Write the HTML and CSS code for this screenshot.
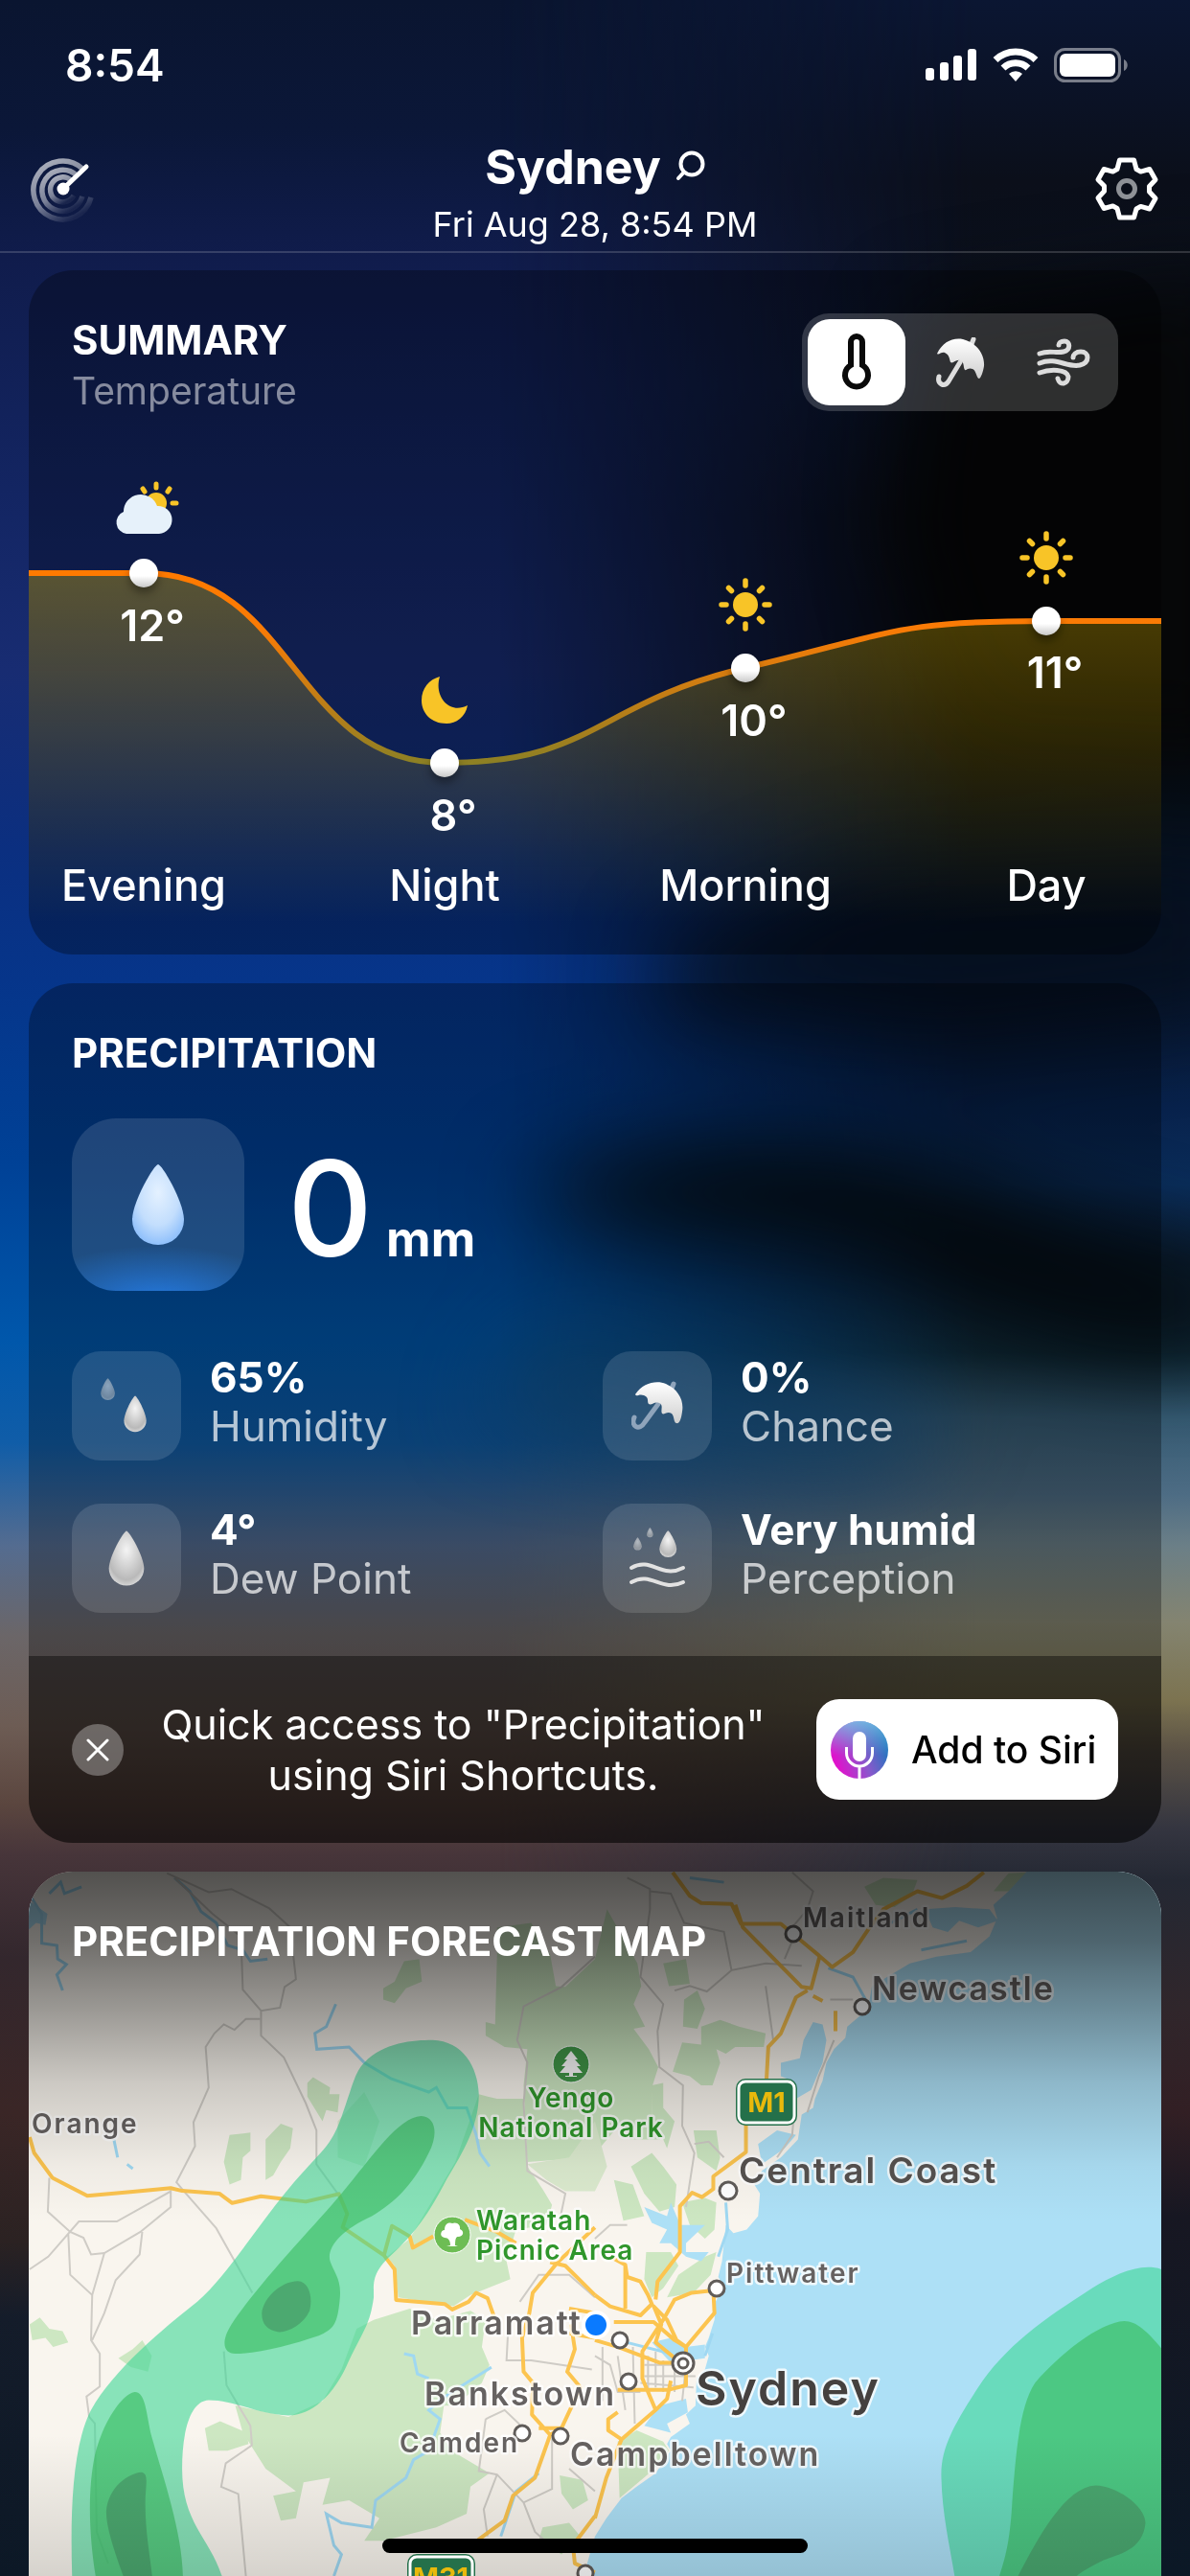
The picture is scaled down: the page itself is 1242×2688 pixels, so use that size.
FILE: index.html
```html
<!DOCTYPE html>
<html lang="en">
<head>
    <meta charset="UTF-8">
    <meta name="viewport" content="width=device-width, initial-scale=1.0">
    <title>Sydney Weather</title>
    <link rel="stylesheet" href="styles.css">
</head>
<body>

    <!-- Blurred night sky behind everything -->
    <svg class="sky" viewBox="0 0 1242 2688" preserveAspectRatio="none" aria-hidden="true">
        <defs>
            <linearGradient id="sky-left" x1="0" y1="0" x2="0" y2="1">
                <stop offset="0" stop-color="#0a1530"/>
                <stop offset=".05" stop-color="#0b1738"/>
                <stop offset=".1" stop-color="#101c4c"/>
                <stop offset=".19" stop-color="#132562"/>
                <stop offset=".26" stop-color="#182c72"/>
                <stop offset=".33" stop-color="#0b2f80"/>
                <stop offset=".38" stop-color="#06358a"/>
                <stop offset=".45" stop-color="#004196"/>
                <stop offset=".52" stop-color="#0057ab"/>
                <stop offset=".56" stop-color="#105da8"/>
                <stop offset=".6" stop-color="#546c90"/>
                <stop offset=".635" stop-color="#6b6668"/>
                <stop offset=".67" stop-color="#6d5c54"/>
                <stop offset=".7" stop-color="#5b463f"/>
                <stop offset=".72" stop-color="#47353a"/>
                <stop offset=".76" stop-color="#33272d"/>
                <stop offset=".82" stop-color="#3a2626"/>
                <stop offset=".87" stop-color="#2b2222"/>
                <stop offset=".9" stop-color="#141c2a"/>
                <stop offset="1" stop-color="#0c1826"/>
            </linearGradient>
            <linearGradient id="sky-right" x1="0" y1="0" x2="0" y2="1">
                <stop offset="0" stop-color="#0b1632"/>
                <stop offset=".04" stop-color="#0b1225"/>
                <stop offset=".07" stop-color="#0b0f1a"/>
                <stop offset=".15" stop-color="#0a111e"/>
                <stop offset=".2" stop-color="#080909"/>
                <stop offset=".28" stop-color="#060709"/>
                <stop offset=".33" stop-color="#06101c"/>
                <stop offset=".38" stop-color="#06142a"/>
                <stop offset=".43" stop-color="#08224c"/>
                <stop offset=".46" stop-color="#0a2d5a"/>
                <stop offset=".49" stop-color="#0b2038"/>
                <stop offset=".525" stop-color="#12303f"/>
                <stop offset=".55" stop-color="#355a72"/>
                <stop offset=".58" stop-color="#4d6c84"/>
                <stop offset=".6" stop-color="#6b7f87"/>
                <stop offset=".63" stop-color="#848470"/>
                <stop offset=".66" stop-color="#7c7350"/>
                <stop offset=".68" stop-color="#5a5145"/>
                <stop offset=".71" stop-color="#343540"/>
                <stop offset=".73" stop-color="#242833"/>
                <stop offset=".78" stop-color="#30262b"/>
                <stop offset=".82" stop-color="#321f24"/>
                <stop offset=".86" stop-color="#171722"/>
                <stop offset="1" stop-color="#0b1826"/>
            </linearGradient>
            <linearGradient id="sky-fade">
                <stop offset=".42" stop-color="#000"/>
                <stop offset=".82" stop-color="#fff"/>
            </linearGradient>
            <mask id="sky-mask"><rect width="1242" height="2688" fill="url(#sky-fade)"/></mask>
            <filter id="soft" x="-40%" y="-60%" width="180%" height="220%" color-interpolation-filters="sRGB"><feGaussianBlur stdDeviation="45"/></filter>
        </defs>
        <rect width="1242" height="2688" fill="url(#sky-left)"/>
        <rect width="1242" height="2688" fill="url(#sky-right)" mask="url(#sky-mask)"/>
        <g filter="url(#soft)">
            <path d="M960 330 1300 280 1300 780 1010 760 940 560Z" fill="#060708"/>
            <path d="M690 990 900 900 1300 880 1300 1050 980 1090 700 1060Z" fill="#05101f" opacity=".9"/>
            <path d="M540 1240C700 1180 860 1180 980 1220 1080 1260 1180 1300 1300 1320L1300 1410C1180 1430 1060 1390 920 1320 780 1290 640 1300 540 1240Z" fill="#050d13"/>
            <path d="M560 1390 1000 1480 900 1540 500 1480Z" fill="#155488" opacity=".7"/>
        </g>
    </svg>

    <div class="status-bar">
        <span class="clock">8:54</span>
        <div class="status-icons">
            <svg width="54" height="36" viewBox="0 0 54 36" fill="#fff" aria-hidden="true">
                <rect x="0" y="21" width="9" height="13" rx="3"/>
                <rect x="15" y="15" width="9" height="19" rx="3"/>
                <rect x="29" y="8" width="9" height="26" rx="3"/>
                <rect x="44" y="1" width="9" height="33" rx="3"/>
            </svg>
            <svg width="48" height="36" viewBox="0 0 48 36" aria-hidden="true">
                <g fill="none" stroke="#fff" stroke-width="7">
                    <path d="M3 12.500a30 30 0 0 1 42 0"/>
                    <path d="M11 21a18.500 18.500 0 0 1 26 0"/>
                </g>
                <path d="M24 35l-7-8a10 10 0 0 1 14 0z" fill="#fff"/>
            </svg>
            <svg width="78" height="36" viewBox="0 0 78 36" aria-hidden="true">
                <rect x="1.500" y="1.500" width="67" height="33" rx="10" fill="none" stroke="#fff" stroke-opacity=".45" stroke-width="3"/>
                <rect x="6" y="6" width="58" height="24" rx="6" fill="#fff"/>
                <path d="M73 12c5 2 5 10 0 12z" fill="#fff" fill-opacity=".45"/>
            </svg>
        </div>
    </div>

    <header class="top-bar">
        <button class="icon-button" aria-label="Radar">
            <svg width="70" height="70" viewBox="0 0 70 70" fill="none" aria-hidden="true">
                <defs>
                    <linearGradient id="radar" x1=".2" y1="0" x2=".75" y2=".95">
                        <stop offset="0" stop-color="#fff" stop-opacity=".65"/>
                        <stop offset=".55" stop-color="#fff" stop-opacity=".45"/>
                        <stop offset="1" stop-color="#fff" stop-opacity=".05"/>
                    </linearGradient>
                </defs>
                <g stroke="url(#radar)" stroke-width="5.500">
                    <path d="M55 14A30.500 30.500 0 1 0 64 44"/>
                    <path d="M49 21A21.500 21.500 0 1 0 55 43"/>
                    <path d="M43 26A13 13 0 1 0 46 42"/>
                </g>
                <circle cx="35" cy="35" r="6.500" fill="#fff"/>
                <path d="M35 35 59 12" stroke="#fff" stroke-width="5" stroke-linecap="round"/>
            </svg>
        </button>
        <div class="place">
            <h1>Sydney
                <svg width="32" height="34" viewBox="0 0 32 34" fill="none" stroke="#fff" stroke-width="4" stroke-linecap="round" aria-hidden="true">
                    <circle cx="18" cy="14" r="11.500"/>
                    <path d="M9.500 23 4 29"/>
                </svg>
            </h1>
            <p>Fri Aug 28, 8:54 PM</p>
        </div>
        <button class="icon-button" aria-label="Settings">
            <svg width="70" height="70" viewBox="0 0 70 70" fill="none" stroke-linejoin="round" aria-hidden="true">
                <path stroke="#fff" stroke-width="5" d="M27.500 5h15l2.500 9.500 4.500 2.600 9.300-2.600 6.200 11-6.500 7v5.500l6.500 7-6.200 11-9.300-2.600-4.500 2.600L42.500 65h-15L25 55.500l-4.500-2.600-9.300 2.600L5 44.500l6.500-7V32L5 25.500l6.200-11 9.300 2.600 4.500-2.600z"/>
                <circle cx="35" cy="35" r="8.500" stroke="#8e9197" stroke-width="5"/>
            </svg>
        </button>
    </header>

    <main>
        <section class="card">
            <div class="summary-head">
                <div>
                    <h2>SUMMARY</h2>
                    <p class="subtitle">Temperature</p>
                </div>
                <div class="segments">
                    <button class="active" aria-label="Temperature">
                        <svg width="32" height="60" viewBox="0 0 32 60" fill="none" stroke="#0a0a0a" stroke-width="6" aria-hidden="true">
                            <path d="M10 33V9a6 6 0 0 1 12 0v24a12 12 0 1 1-12 0z"/>
                        </svg>
                    </button>
                    <button aria-label="Precipitation">
                        <svg width="53" height="53" viewBox="0 0 53 53" aria-hidden="true">
                            <defs>
                                <linearGradient id="silver" x1="0" y1="0" x2="0" y2="1">
                                    <stop offset="0" stop-color="#fff"/>
                                    <stop offset="1" stop-color="#cfcfcf"/>
                                </linearGradient>
                            </defs>
                            <path d="M26 26 14 46C9 53 2 48 4 41M38 7l2-5" fill="none" stroke="#dedede" stroke-width="5" stroke-linecap="round"/>
                            <path d="M2 17C8 5 18 0 29 2 44 6 52 18 51 30 50 36 48 42 46 43 43 43 43 34 39 33 35 31 32 35 31 34 29 31 31 26 26 24 21 23 19 28 16 26 15 23 15 18 10 16 6 15 4 19 2 17Z" fill="url(#silver)"/>
                        </svg>
                    </button>
                    <button aria-label="Wind">
                        <svg width="56" height="52" viewBox="0 0 56 52" fill="none" stroke="#dcdcdc" stroke-width="5" stroke-linecap="round" aria-hidden="true">
                            <path d="M3 17C13 13 20 17 28 15 36 13 35 4 29 4 25 4 23 6 23 8"/>
                            <path d="M3 27C20 20 32 32 45 29 56 26 55 15 46 15 41 15 38 18 38 21"/>
                            <path d="M3 37C14 33 31 33 33 41 33 49 24 51 22 43"/>
                        </svg>
                    </button>
                </div>
            </div>

            <svg class="chart" viewBox="0 0 1182 563" role="img" aria-label="Temperature by time of day">
                <defs>
                    <linearGradient id="line" gradientUnits="userSpaceOnUse" x1="0" y1="165" x2="0" y2="363">
                        <stop offset="0" stop-color="#ff7a00"/>
                        <stop offset=".3" stop-color="#f97b06"/>
                        <stop offset="1" stop-color="#8d8024"/>
                    </linearGradient>
                    <linearGradient id="area" gradientUnits="userSpaceOnUse" x1="0" y1="165" x2="0" y2="530">
                        <stop offset="0" stop-color="#ffd000" stop-opacity=".31"/>
                        <stop offset=".7" stop-color="#ffd000" stop-opacity=".09"/>
                        <stop offset="1" stop-color="#ffd000" stop-opacity="0"/>
                    </linearGradient>
                    <linearGradient id="knob" x1="0" y1="0" x2="0" y2="1">
                        <stop offset=".6" stop-color="#fff"/>
                        <stop offset="1" stop-color="#c9c9c9"/>
                    </linearGradient>
                    <filter id="drop" x="-50%" y="-50%" width="200%" height="220%" color-interpolation-filters="sRGB"><feDropShadow dx="0" dy="6" stdDeviation="5" flood-opacity=".35"/></filter>
                    <g id="sun" stroke="#f8c427" stroke-width="5.500" stroke-linecap="round">
                        <circle r="13" fill="#f8c427" stroke="none"/>
                        <path d="M0-20v-5M0 20v5M-20 0h-5M20 0h5M14.500-14.500l3-3M-14.500-14.500l-3-3M14.500 14.500l3 3M-14.500 14.500l-3 3"/>
                    </g>
                </defs>
                <path d="M0 165H120C277 165 277 363 434 363S591 301 748 264 905 215 1062 215H1182V563H0Z" fill="url(#area)"/>
                <path d="M-5 165H120C277 165 277 363 434 363S591 301 748 264 905 215 1062 215H1190" fill="none" stroke="url(#line)" stroke-width="6"/>
                <g fill="url(#knob)" filter="url(#drop)">
                    <circle cx="120" cy="165" r="15"/>
                    <circle cx="434" cy="363" r="15"/>
                    <circle cx="748" cy="264" r="15"/>
                    <circle cx="1062" cy="215" r="15"/>
                </g>

                <!-- weather icons -->
                <g stroke="#f8c427" stroke-width="5" stroke-linecap="round">
                    <circle cx="133" cy="92" r="11" fill="#f8c427" stroke="none"/>
                    <path d="M133 76v-4M145 80l2-3M121 80l-2-3M150 92h4"/>
                </g>
                <path d="M102 124A12 12 0 0 1 99 101 18 18 0 0 1 134 95 14.500 14.500 0 0 1 136 124Z" fill="#e6f1fa"/>
                <path d="M429 273C425 286 430 299 440 304 446 307 452 306 458 303 456 315 446 322 436 322 420 322 410 311 410 298 410 285 418 276 429 273Z" fill="#f8c427"/>
                <use href="#sun" x="748" y="198"/>
                <use href="#sun" x="1062" y="149"/>

                <g class="temps">
                    <text x="129" y="236">12°</text>
                    <text x="443" y="434">8°</text>
                    <text x="757" y="335">10°</text>
                    <text x="1071" y="285">11°</text>
                </g>
                <g class="times">
                    <text x="120" y="507">Evening</text>
                    <text x="434" y="507">Night</text>
                    <text x="748" y="507">Morning</text>
                    <text x="1062" y="507">Day</text>
                </g>
            </svg>
        </section>

        <section class="card">
            <div class="precipitation">
                <h2>PRECIPITATION</h2>
                <div class="amount">
                    <div class="tile tile-large">
                        <svg width="56" height="86" viewBox="0 0 56 86" aria-hidden="true">
                            <defs>
                                <radialGradient id="blue-drop" cx=".5" cy=".35" r=".68">
                                    <stop offset="0" stop-color="#e4f1ff"/>
                                    <stop offset=".6" stop-color="#c3defd"/>
                                    <stop offset="1" stop-color="#8abdfb"/>
                                </radialGradient>
                                <radialGradient id="grey-drop" cx=".5" cy=".35" r=".68">
                                    <stop offset="0" stop-color="#f4f4f4"/>
                                    <stop offset=".8" stop-color="#b9b9b9"/>
                                    <stop offset="1" stop-color="#dcdcdc"/>
                                </radialGradient>
                                <path id="drop-shape" d="M28 1C32 1 55 40 55 59A27 26 0 0 1 1 59C1 40 24 1 28 1Z"/>
                            </defs>
                            <use href="#drop-shape" fill="url(#blue-drop)"/>
                        </svg>
                    </div>
                    <p class="value">0 <span>mm</span></p>
                </div>

                <div class="details">
                    <div class="detail">
                        <div class="tile">
                            <svg width="72" height="72" viewBox="0 0 72 72" aria-hidden="true">
                                <g transform="translate(9 7) scale(.27)" opacity=".5"><use href="#drop-shape" fill="url(#grey-drop)"/></g>
                                <g transform="translate(33 25) scale(.43 .45)"><use href="#drop-shape" fill="url(#grey-drop)"/></g>
                            </svg>
                        </div>
                        <p><strong>65%</strong>Humidity</p>
                    </div>
                    <div class="detail">
                        <div class="tile">
                            <svg width="54" height="52" viewBox="0 0 54 52" aria-hidden="true">
                                <path d="M28 24 14 43C8 53-1 47 3 38M42 8l2-5" fill="none" stroke="#8fa4bb" stroke-width="5" stroke-linecap="round"/>
                                <path d="M4 14C12 2 26-1 36 3 49 9 55 20 53 32 52 40 50 45 47 44 44 44 45 37 42 34 37 31 34 36 32 34 30 31 34 25 29 23 24 21 21 26 18 24 16 22 19 17 13 15 8 13 5 17 4 14Z" fill="url(#silver)"/>
                            </svg>
                        </div>
                        <p><strong>0%</strong>Chance</p>
                    </div>
                    <div class="detail">
                        <div class="tile">
                            <svg width="38" height="60" viewBox="0 0 56 86" aria-hidden="true">
                                <use href="#drop-shape" fill="url(#grey-drop)"/>
                            </svg>
                        </div>
                        <p><strong>4°</strong>Dew Point</p>
                    </div>
                    <div class="detail">
                        <div class="tile">
                            <svg width="60" height="66" viewBox="0 0 60 66" aria-hidden="true">
                                <g transform="translate(5 11) scale(.16)" opacity=".6"><use href="#drop-shape" fill="url(#grey-drop)"/></g>
                                <g transform="translate(19 1) scale(.12)" opacity=".6"><use href="#drop-shape" fill="url(#grey-drop)"/></g>
                                <g transform="translate(32 4) scale(.33)"><use href="#drop-shape" fill="url(#grey-drop)"/></g>
                                <path d="M3 43C24 31 34 55 57 43M3 58C24 46 34 69 57 58" fill="none" stroke="#e2e2e2" stroke-width="4" stroke-linecap="round"/>
                            </svg>
                        </div>
                        <p><strong>Very humid</strong>Perception</p>
                    </div>
                </div>
            </div>

            <div class="siri">
                <button class="close" aria-label="Dismiss">
                    <svg width="24" height="24" viewBox="0 0 24 24" stroke="#fff" stroke-width="3" stroke-linecap="round" aria-hidden="true"><path d="M2 2 22 22M22 2 2 22"/></svg>
                </button>
                <p>Quick access to "Precipitation" using Siri Shortcuts.</p>
                <button class="add-siri">
                    <svg width="60" height="60" viewBox="0 0 60 60" aria-hidden="true">
                        <defs>
                            <linearGradient id="siri-a" x1="0" y1=".8" x2="1" y2=".4">
                                <stop offset=".1" stop-color="#e012cc"/>
                                <stop offset=".55" stop-color="#8a58cc"/>
                                <stop offset="1" stop-color="#1878bd"/>
                            </linearGradient>
                            <linearGradient id="siri-b" x1="0" y1="0" x2="0" y2="1">
                                <stop offset="0" stop-color="#7fcbea" stop-opacity=".75"/>
                                <stop offset=".6" stop-color="#7fb0e0" stop-opacity="0"/>
                            </linearGradient>
                        </defs>
                        <circle cx="30" cy="30" r="30" fill="url(#siri-a)"/>
                        <circle cx="30" cy="30" r="30" fill="url(#siri-b)"/>
                        <rect x="23" y="11" width="14" height="31" rx="7" fill="#fff"/>
                        <path d="M16.500 27v6a13.500 14 0 0 0 27 0v-6M30 47v13" fill="none" stroke="#fff" stroke-width="3"/>
                    </svg>
                    Add to Siri
                </button>
            </div>
        </section>

        <section class="card map-card">
            <h2>PRECIPITATION FORECAST MAP</h2>
            <svg class="map" viewBox="0 0 1182 735" role="img" aria-label="Rain around Sydney">
                <defs>
                    <linearGradient id="map-shade" x1="0" y1="0" x2="0" y2="1">
                        <stop offset="0" stop-opacity=".67"/>
                        <stop offset=".1" stop-opacity=".55"/>
                        <stop offset=".2" stop-opacity=".37"/>
                        <stop offset=".3" stop-opacity=".18"/>
                        <stop offset=".42" stop-opacity=".04"/>
                        <stop offset=".5" stop-opacity="0"/>
                        <stop offset=".8" stop-opacity="0"/>
                        <stop offset="1" stop-opacity=".14"/>
                    </linearGradient>
                </defs>
                <rect width="1182" height="735" fill="#f9f5ee"/>

                <!-- terrain, drawn on a 2985 x 1568 sheet -->
                <g class="terrain" transform="translate(-30 -3) scale(.396 .4707)">
                    <g fill="#cde7c2">
                        <path d="M1310 190 1310 130 1400 120 1450 190 1465 260 1490 262 1568 200 1600 90 1680 210 1690 260 1670 300 1700 350 1670 355 1710 400 1735 440 1720 480 1718 560 1740 600 1660 600 1640 560 1560 640 1390 650 1380 480 1390 400 1330 395 1280 370 1280 340 1305 345Z"/>
                        <path d="M1262 500 1310 510 1380 510 1390 660 1430 710 1455 745 1440 790 1360 800 1335 870 1345 910 1240 945 1195 970 1050 950 1040 880 1020 860 1080 820 1200 650Z"/>
                        <path d="M985 1000 1080 975 1150 1000 1240 980 1280 1000 1270 1060 1290 1100 1270 1140 1200 1190 1170 1190 1160 1250 1190 1290 1290 1340 1240 1370 1230 1430 1150 1460 1010 1490 960 1490 1000 1440 920 1400 850 1410 870 1350 800 1360 780 1440 740 1445 720 1390 780 1380 700 1330 640 1250 620 1190 760 1215 850 1180 900 1110 940 1020Z"/>
                        <path d="M1010 265 1040 250 1065 205 1105 200 1112 250 1070 265 1040 298 1010 290Z"/>
                        <path d="M810 475 825 462 870 485 868 500 895 500 890 540 860 535 850 560 810 505ZM590 650 605 590 660 585 660 625 640 640 635 690 605 700ZM700 600 740 565 772 575 765 620 740 650 720 680 700 690Z"/>
                        <path d="M78 1010 105 995 130 1020 165 1025 180 1050 140 1060 120 1040 85 1045ZM312 1085 350 1065 375 1045 400 1080 390 1115 345 1105ZM540 1240 580 1225 650 1250 655 1275 600 1290 550 1290Z"/>
                        <path d="M1475 1345 1535 1355 1550 1400 1510 1420 1480 1385ZM1430 1460 1500 1450 1530 1480 1480 1520 1420 1490Z"/>
                    </g>
                    <g fill="#dcebcf">
                        <path d="M1390 655 1500 640 1568 560 1600 660 1568 715 1490 715 1440 690ZM890 560 960 495 1000 560 960 660 890 640Z"/>
                    </g>
                    <g transform="translate(1568)" fill="#cde7c2">
                        <path d="M710 40 760 20 850 25 835 60 790 85 740 80ZM1050 50 1090 10 1140 8 1100 50Z"/>
                        <path d="M180 210 240 200 250 255 195 260ZM235 290 270 270 290 310 270 355 232 350ZM280 350 330 335 380 350 450 365 445 395 370 395 345 410 320 400 330 430 310 480 280 480 250 460 205 450 230 385 280 390Z"/>
                        <path d="M150 480 180 475 180 530 210 560 190 620 170 580 150 575ZM260 580 320 580 330 640 320 670 270 640ZM95 660 150 630 180 660 215 700 210 750 170 760 130 720ZM50 690 100 700 130 770 75 780Z"/>
                        <path d="M230 740 290 730 320 740 315 800 290 820 250 790ZM135 850 200 850 220 880 180 930 150 950 130 910ZM190 950 220 900 290 860 320 850 305 900 260 940ZM60 1270 110 1245 180 1270 195 1290 150 1335 65 1395Z"/>
                    </g>

                    <!-- sea and lakes -->
                    <path transform="translate(1568)" fill="#ade0f6" d="M1145 0 1090 50 1050 80 1060 110 1040 150 990 185 900 195 830 210 770 240 730 260 722 300 700 325 665 350 660 375 630 400 610 430 600 470 580 510 575 530 545 545 535 600 490 640 440 670 420 700 435 720 430 770 400 800 365 808 345 790 340 830 335 870 325 905 340 925 318 960 315 1000 300 1040 290 1060 300 1080 290 1110 268 1130 265 1190 240 1210 250 1230 200 1260 190 1275 200 1290 160 1340 110 1370 70 1395 30 1440 0 1480-30 1568H1500V0Z"/>
                    <g transform="translate(1568)" fill="#ade0f6">
                        <path d="M870 90 950 85 1040 90 1062 115 1010 130 960 115 930 140 890 130ZM575 340 600 345 610 380 600 430 570 490 530 510 520 470 490 460 490 430 540 420 550 380ZM430 610 480 580 530 590 500 620 440 655ZM150 1050 200 1040 240 1060 290 1055 290 1085 200 1095ZM170 1190 240 1175 245 1205 190 1230 200 1250 130 1235Z"/>
                        <path d="M130 750 190 770 200 740 225 790 290 790 240 830 240 850 300 850 280 870 240 860 200 830 170 830 190 800 150 785Z"/>
                    </g>
                    <path fill="#ade0f6" d="M76 70 100 85 125 100 120 125 95 120 76 135Z"/>
                    <g class="water">
                        <path d="M80 60 110 100 110 165 150 170 152 200 175 212 150 235 165 270M130 55 160 30 170 55 215 40M460 20 500 50 530 95 570 120 600 170 640 180 660 205 705 200M885 300 860 350 830 365 835 400 920 395 960 430 1030 465 1130 495 1150 485 1180 530 1230 530 1255 590 1265 630 1290 660M1065 1075 1090 1080 1100 1120 1130 1130M1295 1105 1210 1150 1165 1175 1130 1200 1160 1220 1130 1290 1090 1310 1070 1350 990 1400 980 1460 900 1450 860 1430 880 1500 900 1520 880 1568M1320 1480 1360 1380 1420 1340M300 600 310 640M335 655 350 665"/>
                        <path transform="translate(1568)" d="M615 220 680 240 720 300M850 90 780 120M980 160 860 180M345 740 350 800 325 860M60 1045 200 1075M310 1030 290 1080M250 20 340 30"/>
                    </g>

                    <g class="minor-roads">
                        <path d="M440 10 550 52 610 45 710 88 765 130 780 245 750 262 738 308 688 315 640 268 635 150 560 100 460 20M688 315 688 370 748 418 806 520 834 580 834 655 890 720M685 333 648 333 618 357 590 345 565 365 542 395 550 485 510 562 514 615 465 695 490 720 570 797 665 940M130 685 126 760 185 805 220 818 240 855 275 852 370 805 450 750 450 715 308 782 208 782 127 860 78 888M180 810 185 900 243 945 240 1045 263 1075 263 1148 228 1170 235 1215 250 1230 255 1470 285 1540M375 805 368 855 305 912 275 985 243 1045M275 852 243 945M590 1070 597 1145 660 1235 664 1278 595 1318 583 1370 628 1386 648 1568"/>
                        <path d="M1568 195 1480 262 1380 305 1363 380 1390 430 1380 520 1390 670 1490 720 1475 780M1340 1010 1335 1090 1400 1090 1480 1100 1560 1110M1370 960 1420 900 1500 900 1568 950M1280 1220 1330 1200 1380 1240M1280 1220 1262 1335 1310 1343 1380 1405 1455 1375 1455 1260M1310 1343 1275 1420 1285 1480M1380 1405 1410 1470 1450 1500M1500 1330 1568 1380"/>
                        <path transform="translate(1568)" d="M85 20 145 45 145 90 120 240 180 300 165 360 170 440 232 480 230 570 262 630 240 750M145 50 200 55 235 120 340 140 360 225 450 210 545 215M210 270 250 260 295 272 360 225M450 260 470 380M520 8 575 50 560 90 520 130M530 140 500 200M262 610 300 605 340 640M620 290 680 290M630 380 590 460 560 540M480 640 520 590 525 540M0 820 40 790 85 790M0 1080 40 1100 60 1160 120 1160M20 1060 20 1180M60 1080 80 1200M100 1060 105 1230M140 1080 140 1160M180 1090 180 1160M130 1100H250M130 1125H265M120 1140 260 1150M210 1080V1160M240 1100 230 1180M160 1070 160 1150"/>
                    </g>

                    <g class="major-roads">
                        <path d="M78 595 90 630 138 685 230 725 350 716 450 708 480 714 578 720 612 741 688 726 806 738 893 721 915 765 903 795 1012 857 1033 792 1080 815 1088 840 1142 815M1012 857 1040 888 1044 956 1172 965 1192 977 1235 960 1255 940 1285 952 1305 1000M1225 778 1310 805 1360 830M1568 795 1470 872 1404 940 1395 985 1376 1040 1380 1115 1405 1140 1402 1210 1450 1255 1410 1350 1352 1390 1330 1445 1260 1488M1450 872 1490 880 1568 945M1500 975 1568 985M1505 1010 1515 1065 1495 1115 1530 1150 1480 1240 1420 1240M1450 1255 1480 1240M1568 1435 1510 1500 1515 1540 1568 1560M1500 1030 1568 1040"/>
                        <path transform="translate(1568)" d="M205 8 250 60 280 76 360 78 385 122 490 122 590 192 625 218 680 185 720 135 760 90 850 50 915 65 980 38 1025 8M370 80 390 130 545 262 570 265 592 195M560 270 530 285 490 365 457 395 452 470M398 565 398 628 312 682 312 710 282 728 256 718 224 748 224 850 165 915 160 955M0 945 40 970 120 990 150 965 140 945 120 915 85 905 80 878 40 860M80 878 80 975M50 1005H155L210 1045 240 1060 315 985 312 935 255 940 210 955 180 1000 125 1070 125 1130 160 1200 70 1265 35 1245 35 1220 60 1205M0 1045 60 1060 170 1095 225 1095 160 1050 175 1010 155 970 190 1000 215 1045 240 1060 240 1145 195 1155 60 1155M70 1265 30 1350 0 1440M200 1135 190 1175 160 1200M575 282 600 293M634 315V360"/>
                    </g>

                    <!-- rain -->
                    <g class="rain">
                        <path class="light" d="M960 430C1010 385 1090 380 1140 380 1220 382 1260 440 1262 500 1262 580 1210 640 1170 700 1120 780 1080 820 1020 865 980 900 985 920 985 950 975 1010 960 1020 920 1090 880 1170 820 1212 760 1212 680 1210 620 1178 550 1178 500 1180 480 1250 480 1330 480 1450 550 1480 585 1568L190 1568C185 1430 190 1280 240 1200 300 1110 430 1020 520 960 600 900 680 790 760 710 850 620 870 620 900 550 930 480 935 450 960 430Z"/>
                        <path class="medium" d="M1110 548C1150 550 1155 590 1130 630 1090 700 1040 740 980 770 900 800 860 840 870 870 880 895 900 910 896 950 890 1010 880 1020 840 1035 770 1055 680 1075 620 1075 590 1075 580 1050 610 1010 680 920 830 790 900 720 980 640 1050 550 1110 548ZM355 1160C385 1160 385 1210 400 1260 430 1350 480 1470 482 1568L252 1568C235 1480 230 1380 250 1300 270 1230 320 1165 355 1160Z"/>
                        <path class="heavy" d="M690 985C695 950 740 915 785 914 815 915 825 950 816 980 800 1010 760 1028 735 1027 705 1023 690 1010 690 985ZM372 1338C395 1340 382 1370 383 1410 383 1470 395 1520 401 1568L325 1568C300 1510 280 1460 280 1425 285 1370 340 1340 372 1338Z"/>
                        <g transform="translate(1568)">
                            <path class="light" d="M1500 890C1440 870 1370 900 1310 930 1180 1000 1080 1060 1010 1150 940 1240 910 1290 913 1350 915 1430 935 1500 948 1568L1500 1568Z"/>
                            <path class="medium" d="M1500 1070C1460 1030 1430 1003 1395 1003 1330 1005 1220 1080 1160 1140 1120 1190 1110 1290 1100 1400 1095 1480 1085 1520 1066 1568L1500 1568Z"/>
                            <path class="heavy" d="M1115 1568C1170 1480 1240 1370 1320 1367 1370 1367 1450 1410 1451 1450 1445 1510 1380 1520 1340 1533 1310 1545 1280 1560 1270 1568Z"/>
                        </g>
                    </g>
                </g>

                <!-- parks -->
                <circle cx="566" cy="201" r="19" fill="#419848" stroke="#fff" stroke-width="1"/>
                <path d="M566 187 573 196H570L576 203H572L578 210H568V213H572V214H560V213H564V210H554L560 203H556L562 196H559Z" fill="#fff"/>
                <circle cx="442" cy="379" r="19" fill="#6dbd54" stroke="#fff" stroke-width="1"/>
                <path d="M434 382C428 381 430 374 434 374 434 366 440 366 442 367 447 365 451 369 450 373 455 375 454 381 448 381 446 381 445 383 445 390L448 391H436L440 390C440 385 438 382 434 382Z" fill="#fff"/>

                <g class="towns">
                    <circle cx="798" cy="65" r="8"/>
                    <circle cx="870" cy="141" r="8"/>
                    <circle cx="730" cy="333" r="9"/>
                    <circle cx="718" cy="435" r="8"/>
                    <circle cx="515" cy="586" r="8"/>
                    <circle cx="555" cy="589" r="8"/>
                    <circle cx="581" cy="732" r="8"/>
                    <circle cx="683" cy="513" r="11"/>
                    <circle cx="683" cy="513" r="5"/>
                </g>

                <g class="labels">
                    <text class="small" x="3" y="273">Orange</text>
                    <text class="small" x="808" y="58">Maitland</text>
                    <text class="city" x="880" y="134">Newcastle</text>
                    <text class="large" x="741" y="325">Central Coast</text>
                    <text class="small" x="728" y="429">Pittwater</text>
                    <text class="city" x="399" y="483">Parramatta</text>
                    <text class="city" x="413" y="557">Bankstown</text>
                    <text class="small" x="387" y="606">Camden</text>
                    <text class="city" x="565" y="620">Campbelltown</text>
                    <text class="capital" x="696" y="557">Sydney</text>
                    <text class="park middle" x="566" y="246">Yengo</text>
                    <text class="park middle" x="566" y="277">National Park</text>
                    <text class="park" x="467" y="374">Waratah</text>
                    <text class="park" x="467" y="405">Picnic Area</text>
                </g>
                <g class="towns">
                    <circle cx="617" cy="489" r="8"/>
                    <circle cx="626" cy="532" r="8"/>
                </g>

                <circle cx="592" cy="473" r="13" fill="#0a7aff" stroke="#fff" stroke-width="4"/>
                <rect width="1182" height="735" fill="url(#map-shade)"/>

                <g class="shield">
                    <rect x="738" y="216" width="64" height="49" rx="10" class="rim"/>
                    <rect x="741" y="219" width="58" height="43" rx="7"/>
                    <text x="770" y="251">M1</text>
                    <rect x="395" y="712" width="71" height="49" rx="10" class="rim"/>
                    <rect x="398" y="715" width="65" height="43" rx="7"/>
                    <text x="430" y="747">M31</text>
                </g>
            </svg>
        </section>
    </main>

    <div class="home-indicator"></div>
</body>
</html>
```
FILE: styles.css
```css
* {
    box-sizing: border-box;
}

body {
    position: relative;
    margin: 0;
    font-family: Inter, "Liberation Sans", sans-serif;
    font-size: 44px;
    color: #fff;
    background-color: #0b1632;
}

h1, h2, p {
    margin: 0;
}

button {
    border: none;
    padding: 0;
    font-family: inherit;
    color: inherit;
    background: none;
    cursor: pointer;
}

svg {
    display: block;
}

.sky {
    position: absolute;
    top: 0;
    left: 0;
    width: 100%;
    height: 100%;
    z-index: -1;
}

/* Status bar and header */
.status-bar {
    display: flex;
    justify-content: space-between;
    align-items: center;
    height: 132px;
    padding: 4px 64px 0 68px;
}

.clock {
    font-size: 46px;
    font-weight: 600;
}

.status-icons {
    display: flex;
    gap: 16px;
}

.top-bar {
    display: flex;
    justify-content: space-between;
    align-items: center;
    height: 132px;
    padding: 0 31px;
    border-bottom: 2px solid rgba(255, 255, 255, 0.16);
}

.place {
    padding-top: 4px;
    text-align: center;
}

.place h1 {
    display: flex;
    justify-content: center;
    align-items: center;
    gap: 14px;
    font-size: 50px;
    line-height: 70px;
    font-weight: 700;
}

.place p {
    font-size: 36px;
    line-height: 50px;
}

main {
    display: flex;
    flex-direction: column;
    gap: 30px;
    padding: 18px 30px 0;
}

/* Cards */
.card {
    border-radius: 46px;
    overflow: hidden;
    background-color: rgba(0, 0, 0, 0.3);
}

h2 {
    font-size: 42px;
    line-height: 56px;
    font-weight: 700;
}

.summary-head {
    display: flex;
    justify-content: space-between;
    align-items: flex-start;
    padding: 45px 45px 0;
}

.subtitle {
    font-size: 39px;
    line-height: 50px;
    color: rgba(255, 255, 255, 0.5);
}

.segments {
    display: flex;
    gap: 6px;
    width: 330px;
    height: 102px;
    padding: 6px;
    border-radius: 28px;
    background-color: rgba(255, 255, 255, 0.17);
}

.segments button {
    flex: 1;
    display: flex;
    justify-content: center;
    align-items: center;
    border-radius: 23px;
}

.segments .active {
    background-color: #fff;
}

.chart {
    width: 100%;
}

.chart text {
    font-size: 45px;
    fill: #fff;
    text-anchor: middle;
}

.temps {
    font-weight: 600;
}

.times {
    font-weight: 500;
}

/* Precipitation */
.precipitation {
    padding: 45px;
}

.amount {
    display: flex;
    align-items: center;
    gap: 45px;
    margin: 40px 0 63px;
}

.tile {
    flex: none;
    display: flex;
    justify-content: center;
    align-items: center;
    width: 114px;
    height: 114px;
    border-radius: 30px;
    background-color: rgba(255, 255, 255, 0.12);
}

.tile-large {
    width: 180px;
    height: 180px;
    border-radius: 46px;
    background: radial-gradient(ellipse 80% 32% at 50% 106%, #2478dd, rgba(36, 120, 221, 0)), rgba(255, 255, 255, 0.12);
}

.value {
    display: flex;
    align-items: baseline;
    gap: 14px;
    padding-top: 8px;
    font-size: 138px;
    line-height: 172px;
    font-weight: 500;
}

.value span {
    font-size: 51px;
    line-height: 60px;
    font-weight: 700;
}

.details {
    display: grid;
    grid-template-columns: 1fr 1fr;
    gap: 45px 16px;
}

.detail {
    display: flex;
    align-items: center;
    gap: 30px;
}

.detail p {
    padding-bottom: 8px;
    line-height: 51px;
    color: rgba(255, 255, 255, 0.7);
}

.detail strong {
    display: block;
    font-weight: 700;
    color: #fff;
}

.siri {
    display: flex;
    justify-content: space-between;
    align-items: center;
    height: 195px;
    padding: 0 45px;
    background-color: rgba(0, 0, 0, 0.4);
}

.siri p {
    width: 670px;
    padding-right: 14px;
    font-size: 43px;
    line-height: 53px;
    text-align: center;
}

.close {
    display: flex;
    justify-content: center;
    align-items: center;
    width: 54px;
    height: 54px;
    border-radius: 50%;
    background-color: rgba(255, 255, 255, 0.3);
}

.add-siri {
    display: flex;
    align-items: center;
    gap: 24px;
    width: 315px;
    height: 105px;
    padding-left: 15px;
    border-radius: 24px;
    font-size: 39px;
    font-weight: 500;
    color: #000;
    white-space: nowrap;
    background-color: #fff;
}

/* Map */
.map-card {
    position: relative;
    border-radius: 46px 46px 0 0;
}

.map-card h2 {
    position: absolute;
    top: 45px;
    left: 45px;
}

.map {
    width: 100%;
}

.terrain path {
    vector-effect: non-scaling-stroke;
}

.water {
    fill: none;
    stroke: #9fd8f2;
    stroke-width: 3;
}

.minor-roads {
    fill: none;
    stroke: #cfccc6;
    stroke-width: 2;
}

.major-roads {
    fill: none;
    stroke: #fcc44f;
    stroke-width: 4;
    stroke-linejoin: round;
}

.light {
    fill: rgba(60, 215, 150, 0.6);
}

.medium {
    fill: rgba(62, 190, 100, 0.65);
}

.heavy {
    fill: rgba(74, 160, 108, 0.8);
}

.towns {
    fill: #fff;
    stroke: #605c59;
    stroke-width: 3;
}

.labels {
    fill: #666261;
    stroke: rgba(255, 255, 255, 0.8);
    stroke-width: 5;
    stroke-linejoin: round;
    paint-order: stroke;
    font-weight: 600;
    letter-spacing: 2px;
}

.small {
    font-size: 28px;
}

.city {
    font-size: 34px;
}

.large {
    font-size: 37px;
    fill: #565250;
}

.capital {
    font-size: 50px;
    fill: #45413f;
}

.park {
    font-size: 28px;
    fill: #2f962b;
    letter-spacing: 1px;
}

.middle {
    text-anchor: middle;
}

.shield rect {
    fill: #24704a;
    stroke: #fff;
    stroke-width: 3;
}

.shield .rim {
    stroke: none;
}

.shield text {
    font-size: 29px;
    font-weight: 700;
    fill: #e8b90c;
    text-anchor: middle;
}

.home-indicator {
    position: fixed;
    bottom: 24px;
    left: 50%;
    width: 444px;
    height: 15px;
    margin-left: -222px;
    border-radius: 8px;
    background-color: #000;
}
```
